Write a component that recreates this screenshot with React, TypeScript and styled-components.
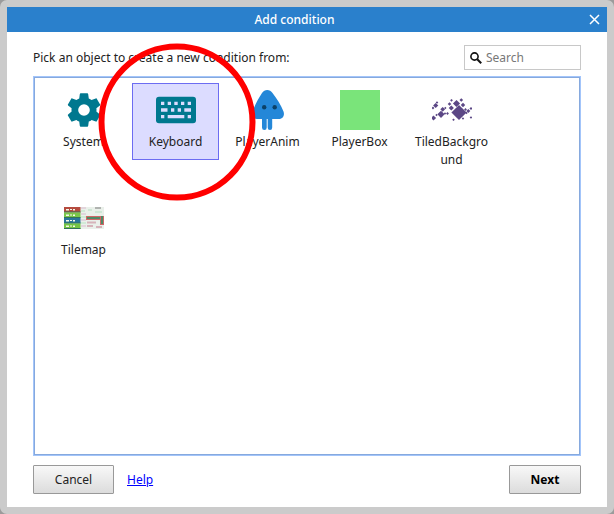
import React from "react";
import styled, { createGlobalStyle } from "styled-components";

const GlobalStyle = createGlobalStyle`
  *, *::before, *::after { box-sizing: border-box; }
  html, body, #root { height: 100%; margin: 0; }
  body { background: #9b9b9b; }
  body, button, input { font: 12px/18px "Noto Sans", "Open Sans", sans-serif; color: #222; }
`;

const Frame = styled.div`
  min-height: 100%;
  display: flex;
  padding: 7px;
  background: #cbcbcb;
  border-radius: 7px;
`;

const Dialog = styled.section`
  flex: 1;
  display: flex;
  flex-direction: column;
  background: #fff;
`;

const TitleBar = styled.header`
  display: flex;
  align-items: center;
  height: 25px;
  background: #2a80cc;
  color: #fff;
`;

const Title = styled.h1`
  flex: 1;
  margin: 0;
  font-size: 12px;
  line-height: 18px;
  font-weight: 500;
  text-align: center;
`;

const CloseButton = styled.button`
  display: grid;
  place-items: center;
  width: 25px;
  height: 25px;
  padding: 0;
  border: 0;
  background: transparent;
  color: #fff;
`;

const Body = styled.div`
  flex: 1;
  display: flex;
  flex-direction: column;
  padding: 13px 26px;
`;

const TopRow = styled.div`
  display: flex;
  align-items: center;
  justify-content: space-between;
  margin-bottom: 6px;
`;

const SearchField = styled.label`
  display: flex;
  align-items: center;
  gap: 4px;
  width: 117px;
  height: 25px;
  padding: 0 5px;
  border: 1px solid #c8c8c8;
  background: #fff;
`;

const SearchInput = styled.input`
  flex: 1;
  min-width: 0;
  padding: 0;
  border: 0;
  outline: 0;
  background: transparent;
  &::placeholder { color: #777; opacity: 1; }
`;

const ObjectList = styled.div`
  flex: 1;
  display: grid;
  grid-template-columns: repeat(auto-fill, 87px);
  align-content: start;
  align-items: start;
  gap: 15px 5px;
  padding: 6px;
  border: 1px solid #a3c5fa;
  box-shadow: inset 0 0 0 1px #86a9de;
`;

const ObjectItem = styled.button<{ $selected?: boolean }>`
  position: relative;
  display: flex;
  flex-direction: column;
  align-items: center;
  gap: 3px;
  min-height: 77px;
  padding: 6px 5px;
  border: 1px solid ${(p) => (p.$selected ? "#6c6cf2" : "transparent")};
  background: ${(p) => (p.$selected ? "#dcdcff" : "transparent")};
`;

const ObjectName = styled.span`
  width: 100%;
  overflow-wrap: anywhere;
  text-align: center;
`;

const ObjectIcon = styled.svg`
  display: block;
  flex: none;
  width: 40px;
  height: 40px;
`;

const Highlight = styled.svg`
  position: absolute;
  z-index: 1;
  top: 50%;
  left: 50%;
  width: 158px;
  height: 158px;
  margin: -79px -78px;
  pointer-events: none;
`;

const Footer = styled.footer`
  display: flex;
  align-items: center;
  gap: 13px;
  margin-top: 9px;
`;

const PushButton = styled.button<{ $primary?: boolean }>`
  height: 29px;
  min-width: ${(p) => (p.$primary ? "72px" : "81px")};
  padding: 0 16px;
  margin-left: ${(p) => (p.$primary ? "auto" : "0")};
  border: 1px solid #999;
  border-radius: 1px;
  background: linear-gradient(#f8f8f8, #dcdcdc);
  font-weight: ${(p) => (p.$primary ? 700 : 400)};
  color: ${(p) => (p.$primary ? "#000" : "#222")};
`;

const HelpLink = styled.a`
  color: #00f;
`;

const SystemIcon = () => (
  <ObjectIcon viewBox="0 0 24 24" fill="#00788f" aria-hidden="true">
    <path d="M12,15.5A3.5,3.5 0 0,1 8.5,12A3.5,3.5 0 0,1 12,8.5A3.5,3.5 0 0,1 15.5,12A3.5,3.5 0 0,1 12,15.5M19.43,12.97C19.47,12.65 19.5,12.33 19.5,12C19.5,11.67 19.47,11.34 19.43,11L21.54,9.37C21.73,9.22 21.78,8.95 21.66,8.73L19.66,5.27C19.54,5.05 19.27,4.96 19.05,5.05L16.56,6.05C16.04,5.66 15.5,5.32 14.87,5.07L14.5,2.42C14.46,2.18 14.25,2 14,2H10C9.75,2 9.54,2.18 9.5,2.42L9.13,5.07C8.5,5.32 7.96,5.66 7.44,6.05L4.95,5.05C4.73,4.96 4.46,5.05 4.34,5.27L2.34,8.73C2.21,8.95 2.27,9.22 2.46,9.37L4.57,11C4.53,11.34 4.5,11.67 4.5,12C4.5,12.33 4.53,12.65 4.57,12.97L2.46,14.63C2.27,14.78 2.21,15.05 2.34,15.27L4.34,18.73C4.46,18.95 4.73,19.03 4.95,18.95L7.44,17.94C7.96,18.34 8.5,18.68 9.13,18.93L9.5,21.58C9.54,21.82 9.75,22 10,22H14C14.25,22 14.46,21.82 14.5,21.58L14.87,18.93C15.5,18.67 16.04,18.34 16.56,17.94L19.05,18.95C19.27,19.03 19.54,18.95 19.66,18.73L21.66,15.27C21.78,15.05 21.73,14.78 21.54,14.63L19.43,12.97Z" />
  </ObjectIcon>
);

const KeyboardIcon = () => (
  <ObjectIcon viewBox="0 0 40 40" aria-hidden="true">
    <rect y="6.7" width="40" height="26.6" rx="3" fill="#00788f" />
    <path
      fill="#dcdcff"
      d="M5 11.7h3.3v3.3H5zM11.7 11.7H15v3.3h-3.3zM18.3 11.7h3.4v3.3h-3.4zM25 11.7h3.3v3.3H25zM31.7 11.7H35v3.3h-3.3zM5 18.3h6.5v3.4H5zM15 18.3h3.3v3.4H15zM21.7 18.3H25v3.4h-3.3zM28.3 18.3H35v3.4h-6.7zM5 25h3.3v3.3H5zM11.7 25h16.6v3.3H11.7zM31.7 25H35v3.3h-3.3z"
    />
  </ObjectIcon>
);

const PlayerAnimIcon = () => (
  <ObjectIcon viewBox="0 0 40 40" aria-hidden="true">
    <path
      fill="#2487d8"
      d="M14 3C16.500 -1 22 -1 24.500 3C29 9 33 15 35.500 21.500C37 26 34.500 29 30.500 29H9C5 29 2.700 26 4.500 21.500C7 15 10 9 14 3ZM14 28H18.700V37.500Q18.700 40 16.400 40Q14 40 14 37.500ZM19.700 28H24.200V37.500Q24.200 40 22 40Q19.700 40 19.700 37.500Z"
    />
    <circle cx="16.200" cy="17.300" r="2.200" fill="#0b4168" />
    <circle cx="26.700" cy="17.300" r="2.200" fill="#0b4168" />
  </ObjectIcon>
);

const PlayerBoxIcon = () => (
  <ObjectIcon viewBox="0 0 40 40" aria-hidden="true">
    <rect width="40" height="40" fill="#7ae47a" />
  </ObjectIcon>
);

// Each entry is a diamond: centre x, centre y, half diagonal.
const diamonds = [
  [27, 22.5, 7.6], [24.5, 13.5, 3.6], [9, 24.3, 3.6], [3.7, 15.5, 2.6],
  [1.5, 28, 2.6], [10.7, 19.3, 2.4], [19.3, 18, 2.6], [31, 15, 2.2],
  [17.5, 14, 1.8], [29.3, 10, 1.8], [19.5, 10.3, 1.4], [5, 12.5, 1.3],
  [1, 18, 1.4], [36.3, 21, 2], [39, 18.5, 1.5], [39, 27.5, 1.3],
  [15.5, 23.5, 1.4], [13.3, 18, 1.2], [4.5, 25, 1.2], [21.5, 29.8, 1.3],
  [33.5, 19.5, 1.4], [34.5, 23, 1.2], [13, 23.5, 1.2], [31, 28.5, 1.2],
];

const TiledBackgroundIcon = () => (
  <ObjectIcon viewBox="0 0 40 40" fill="#5b4785" aria-hidden="true">
    {diamonds.map(([x, y, r]) => (
      <path key={`${x}-${y}`} d={`M${x} ${y - r}l${r} ${r}l${-r} ${r}l${-r} ${-r}z`} />
    ))}
  </ObjectIcon>
);

const bands = [
  ["#b54b3f", 9], ["#79c64a", 14.5], ["#28769b", 20], ["#73c443", 25.5],
] as const;

const TilemapIcon = () => (
  <ObjectIcon viewBox="0 0 40 40" aria-hidden="true">
    <rect y="9" width="40" height="22" fill="#eaf0ea" />
    {bands.map(([color, y]) => (
      <g key={y}>
        <rect y={y} width="16.500" height="5.500" fill={color} />
        <path d={`M2 ${y + 2}h3v1.500h-3zM6 ${y + 2}h2v1h-2zM9 ${y + 2}h2v1.500h-2z`} fill="#f5f7e8" />
        <path d={`M0 ${y + 5}h16.500`} stroke="#31705c" strokeWidth="1" />
      </g>
    ))}
    <path d="M17 10h5M17 16h5M17 22h5M17 28h5" stroke="#e2d5dc" strokeWidth="2" />
    <path d="M17 13h4M17 19h5M17 25h5" stroke="#b9e3c3" strokeWidth="1" />
    <path d="M22 18h18v4H22zM36 20h4v7h-4z" fill="#cf6767" />
    <path d="M23 20h13M38 18v8" stroke="#4f8a66" strokeWidth="2" />
    <path d="M31 10h6" stroke="#777" strokeWidth="1" />
    <path d="M23 24.500h9M23 28h6M32 29h6" stroke="#d6b3ba" strokeWidth="2" />
    <path d="M24 12h4M31 14h7" stroke="#cfe7d5" strokeWidth="2" />
  </ObjectIcon>
);

const objects = [
  { name: "System", Icon: SystemIcon },
  { name: "Keyboard", Icon: KeyboardIcon, selected: true },
  { name: "PlayerAnim", Icon: PlayerAnimIcon },
  { name: "PlayerBox", Icon: PlayerBoxIcon },
  { name: "TiledBackground", Icon: TiledBackgroundIcon },
  { name: "Tilemap", Icon: TilemapIcon },
];

export default function App() {
  return (
    <>
      <GlobalStyle />
      <Frame>
        <Dialog role="dialog" aria-labelledby="dialog-title">
          <TitleBar>
            <Title id="dialog-title">Add condition</Title>
            <CloseButton type="button" aria-label="Close">
              <svg width="11" height="11" viewBox="0 0 11 11" stroke="currentColor" strokeWidth="1.5">
                <path d="M1 1l9 9M10 1l-9 9" />
              </svg>
            </CloseButton>
          </TitleBar>
          <Body>
            <TopRow>
              <span id="pick-label">Pick an object to create a new condition from:</span>
              <SearchField>
                <svg width="12" height="12" viewBox="0 0 12 12" fill="none" stroke="#111" aria-hidden="true">
                  <circle cx="4.500" cy="4.500" r="3.600" strokeWidth="1.600" />
                  <path d="M7.200 7.200l4 4" strokeWidth="2" />
                </svg>
                <SearchInput type="text" placeholder="Search" aria-label="Search" />
              </SearchField>
            </TopRow>
            <ObjectList role="group" aria-labelledby="pick-label">
              {objects.map(({ name, Icon, selected }) => (
                <ObjectItem key={name} type="button" $selected={selected} aria-pressed={!!selected}>
                  <Icon />
                  <ObjectName>{name}</ObjectName>
                  {selected && (
                    <Highlight viewBox="0 0 158 158" fill="none" aria-hidden="true">
                      <circle cx="79" cy="79" r="75.500" stroke="#f00" strokeWidth="6" />
                    </Highlight>
                  )}
                </ObjectItem>
              ))}
            </ObjectList>
            <Footer>
              <PushButton type="button">Cancel</PushButton>
              <HelpLink href="#help">Help</HelpLink>
              <PushButton type="button" $primary>Next</PushButton>
            </Footer>
          </Body>
        </Dialog>
      </Frame>
    </>
  );
}
